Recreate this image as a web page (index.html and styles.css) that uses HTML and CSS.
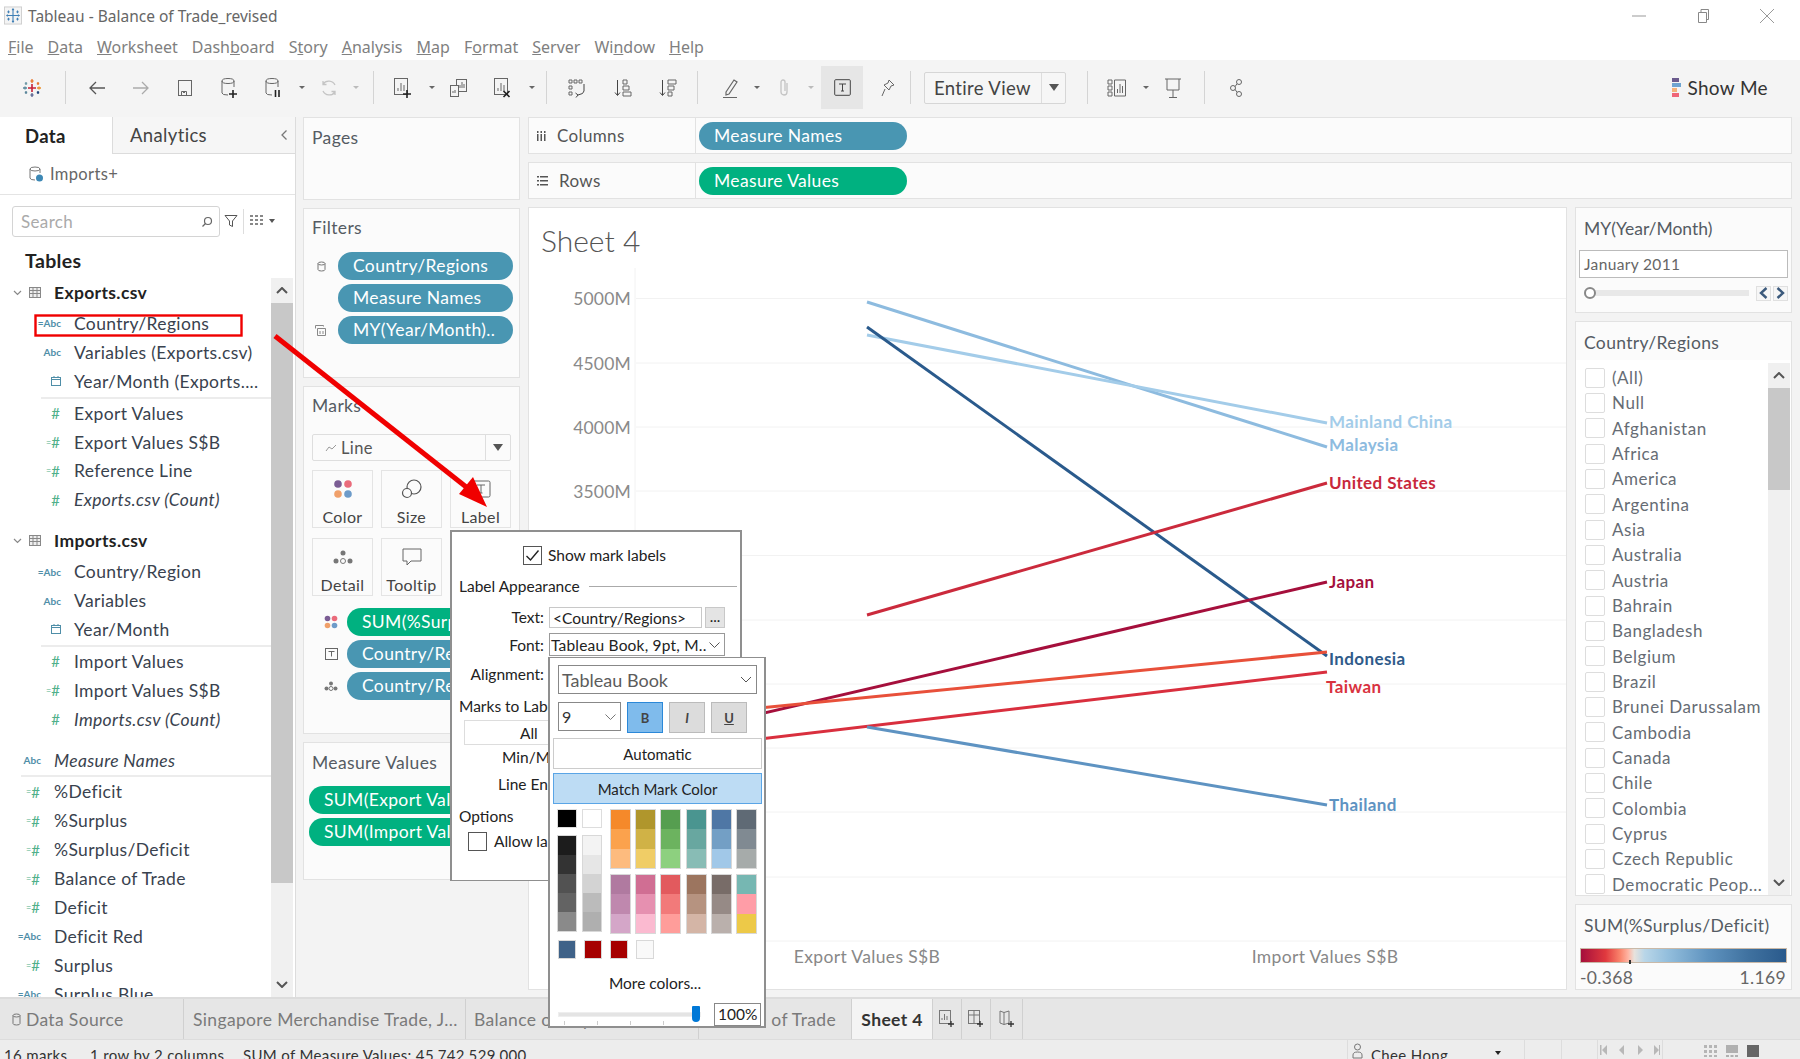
FILE: index.html
```html
<!DOCTYPE html>
<html lang="en">
<head>
<meta charset="utf-8">
<title>Tableau - Balance of Trade_revised</title>
<link rel="stylesheet" href="styles.css">
</head>
<body>
<div class="app">

  <header class="titlebar">
    <svg class="applogo" viewBox="0 0 20 20"><rect x=".5" y=".5" width="19" height="19" fill="#f4f4f4" stroke="#ccc"/><g stroke="#3f7fb5" stroke-width="1.2"><path d="M10 5v10M5 10h10M10 2v3M8.8 3.500h2.400M10 15v3M8.800 16.500h2.400M2.500 10h3M3.800 8.800v2.400M14.500 10h3M16 8.800v2.400M5 4.500v3M3.800 6h2.400M15 4.500v3M13.800 6h2.400M5 12.500v3M3.800 14h2.400M15 12.500v3M13.800 14h2.400"/></g></svg>
    <span class="apptitle">Tableau - Balance of Trade_revised</span>
    <div class="winbtns">
      <svg class="winbtn" viewBox="0 0 16 16"><path d="M1 8h14" stroke="#999" fill="none"/></svg>
      <svg class="winbtn" viewBox="0 0 16 16"><path d="M3.500 4.500h8v10h-8zM6 4.500V1.500h7.500v10H11.500" stroke="#888" fill="none"/></svg>
      <svg class="winbtn" viewBox="0 0 16 16"><path d="M1 1l14 14M15 1L1 15" stroke="#999" fill="none"/></svg>
    </div>
  </header>

  <nav class="menubar">
    <span><u>F</u>ile</span><span><u>D</u>ata</span><span><u>W</u>orksheet</span><span>Dash<u>b</u>oard</span><span>S<u>t</u>ory</span><span><u>A</u>nalysis</span><span><u>M</u>ap</span><span>F<u>o</u>rmat</span><span><u>S</u>erver</span><span>Wi<u>n</u>dow</span><span><u>H</u>elp</span>
  </nav>

  <div class="toolbar">
    <span class="ic logo"><svg width="20" height="20" viewBox="0 0 20 20" fill="none" stroke-width="1.300"><path d="M10 6v8M6 10h8" stroke="#c72035" stroke-width="1.600"/><path d="M10 1v4M8.500 3h3" stroke="#e8762c"/><path d="M10 15v4M8.500 17h3" stroke="#5c6692"/><path d="M1 10h4M3 8.500v3" stroke="#59879b"/><path d="M15 10h4M17 8.500v3" stroke="#eb912b"/><path d="M4 4v3M2.800 5.500h2.400" stroke="#7099a6"/><path d="M16 4v3M14.800 5.500h2.400" stroke="#e8762c"/><path d="M4 13v3M2.800 14.500h2.400" stroke="#5b879b"/><path d="M16 13v3M14.800 14.500h2.400" stroke="#1f447a"/></svg></span>
    <i class="sep m13"></i>
    <span class="ic ml9"><svg width="18" height="16" viewBox="0 0 18 16" fill="none" stroke="#555" stroke-width="1.300"><path d="M17 8H2M8 2L2 8l6 6"/></svg></span>
    <span class="ic"><svg width="18" height="16" viewBox="0 0 18 16" fill="none" stroke="#aaa" stroke-width="1.300"><path d="M1 8h15M10 2l6 6-6 6"/></svg></span>
    <span class="ic"><svg width="16" height="18" viewBox="0 0 16 18" fill="none" stroke="#666"><rect x="1.500" y="1.500" width="13" height="15"/><path d="M4.500 16.500v-4h5v4M6 13.500h2"/></svg></span>
    <span class="ic"><svg width="18" height="22" viewBox="0 0 18 22" fill="none" stroke="#666"><path d="M2 4v12q0 2 6 2M14 4v6M2 4q0-2.500 6-2.500T14 4q0 2.500-6 2.500T2 4z"/><path d="M13 13v8M9 17h8" stroke="#222" stroke-width="1.600"/></svg></span>
    <span class="ic"><svg width="18" height="22" viewBox="0 0 18 22" fill="none" stroke="#666"><path d="M2 4v12q0 2 6 2M14 4v6M2 4q0-2.500 6-2.500T14 4q0 2.500-6 2.500T2 4z"/><path d="M11.500 13v7M15 13v7" stroke="#222" stroke-width="1.600"/></svg></span>
    <span class="dd"></span>
    <span class="ic narrow"><svg width="18" height="18" viewBox="0 0 18 18" fill="none" stroke="#c4c4c4" stroke-width="1.300"><path d="M15 6a7 7 0 0 0-12-1M3 12a7 7 0 0 0 12 1M3 2v3.500h3.500M15 16v-3.500h-3.500"/></svg></span>
    <span class="dd light"></span>
    <i class="sep m10"></i>
    <span class="ic ml7"><svg width="20" height="22" viewBox="0 0 20 22" fill="none" stroke="#666"><rect x="1.500" y="1.500" width="13" height="16"/><path d="M5 14v-3M8 14V6M11 14V8"/><path d="M14 13v8M10 17h8" stroke="#222" stroke-width="1.600"/></svg></span>
    <span class="dd"></span>
    <span class="ic narrow"><svg width="20" height="20" viewBox="0 0 20 20" fill="none" stroke="#666"><rect x="7.500" y="1.500" width="10" height="12"/><rect x="1.500" y="7.500" width="8" height="11" fill="#f4f4f4"/><path d="M11 10V7M13 10V4M15 10V6M4 15v-2M6 15v-3"/></svg></span>
    <span class="ic ml2"><svg width="20" height="22" viewBox="0 0 20 22" fill="none" stroke="#666"><rect x="1.500" y="1.500" width="13" height="16"/><path d="M5 14v-3M8 14V6M11 14V8"/><path d="M10.500 14l6 6M16.500 14l-6 6" stroke="#222" stroke-width="1.600"/></svg></span>
    <span class="dd"></span>
    <i class="sep m7"></i>
    <span class="ic ml8"><svg width="20" height="20" viewBox="0 0 20 20" fill="none" stroke="#666"><path d="M2 2h3v3H2zM7 2h3v3H7zM12 2h3v3h-3zM2 8h3v3H2zM2 14h3v3H2z"/><path d="M17 6v7q0 3-6 4M8.500 15l2.500 2-2 2.500" stroke="#444"/></svg></span>
    <span class="ic ml2"><svg width="20" height="20" viewBox="0 0 20 20" fill="none" stroke="#666"><path d="M4.500 2v15M2 14.500l2.500 3 2.500-3" stroke="#444"/><path d="M10 2h4v4h-4zM10 8h6v4h-6zM10 14h8v4h-8z"/></svg></span>
    <span class="ic ml1"><svg width="20" height="20" viewBox="0 0 20 20" fill="none" stroke="#666"><path d="M4.500 2v15M2 14.500l2.500 3 2.500-3" stroke="#444"/><path d="M10 2h8v4h-8zM10 8h6v4h-6zM10 14h4v4h-4z"/></svg></span>
    <i class="sep m7"></i>
    <span class="ic narrow ml12"><svg width="18" height="22" viewBox="0 0 18 22" fill="none" stroke="#666"><path d="M5 15L13 3l3 2-8 12-3 1zM2 20.500h14" stroke-width="1.200"/></svg></span>
    <span class="dd"></span>
    <span class="ic narrow"><svg width="14" height="20" viewBox="0 0 14 20" fill="none" stroke="#c4c4c4" stroke-width="1.300"><path d="M10 5v9a3 3 0 0 1-6 0V4a2 2 0 0 1 4 0v9"/></svg></span>
    <span class="dd light"></span>
    <span class="ic active ml3"><svg width="17" height="17" viewBox="0 0 17 17" fill="none" stroke="#444"><rect x=".7" y=".7" width="15.600" height="15.600" rx="1"/><path d="M5 5h7M8.500 5v7M7 12h3"/></svg></span>
    <span class="ic ml3"><svg width="16" height="20" viewBox="0 0 16 20" fill="none" stroke="#666"><path d="M9 2l5 5-3 1-2 4-5-5 4-2zM5 11l-3 7"/></svg></span>
    <i class="sep nomargin"></i>
    <div class="viewsel"><span class="viewtxt">Entire View</span><span class="viewarrow"><b class="tri"></b></span></div>
    <i class="sep m21"></i>
    <span class="ic ml7"><svg width="20" height="22" viewBox="0 0 20 22" fill="none" stroke="#666"><path d="M1 3h4v4H1zM1 9h4v4H1zM1 15h4v4H1zM7.500 3h11v16h-11z"/><path d="M10.500 16v-4M13 16V7M15.500 16V9"/></svg></span>
    <span class="dd"></span>
    <span class="ic narrow"><svg width="18" height="22" viewBox="0 0 18 22" fill="none" stroke="#666"><path d="M1 2h16M3 2v11h12V2M9 13v7M5 20.500h8"/></svg></span>
    <i class="sep m11"></i>
    <span class="ic ml9"><svg width="14" height="20" viewBox="0 0 14 20" fill="none" stroke="#666"><circle cx="10" cy="4" r="2.500"/><circle cx="4" cy="10" r="2.500"/><circle cx="10" cy="16" r="2.500"/><path d="M6 8.700l2-3M6 11.300l2 3"/></svg></span>
    <div class="showme"><span class="showicon"><b class="si1"></b><b class="si2"></b><b class="si3"></b><b class="si4"></b></span>Show Me</div>
  </div>

  <main class="main">
    <aside class="datapane">
      <div class="tabs"><div class="tab on">Data</div><div class="tab off">Analytics<svg class="collapse" width="8" height="12" viewBox="0 0 8 12" fill="none" stroke="#777" stroke-width="1.300"><path d="M6.500 1.500L2 6l4.500 4.500"/></svg></div></div>
      <div class="dsrow"><svg width="14" height="16" viewBox="0 0 14 16" fill="none" stroke="#777"><path d="M1 3v9q0 2 5 2M11 3v4M1 3q0-2 5-2t5 2q0 2-5 2-5 0-5-2z"/><circle cx="10.500" cy="12" r="3.500" fill="#3d88b5" stroke="none"/></svg><span>Imports+</span></div>
      <div class="searchrow">
        <div class="search"><span>Search</span><svg width="12" height="12" viewBox="0 0 12 12" fill="none" stroke="#666" stroke-width="1.200"><circle cx="7" cy="5" r="3.500"/><path d="M4.500 7.500L1.500 10.500"/></svg></div>
        <svg class="filt" width="14" height="14" viewBox="0 0 14 14" fill="none" stroke="#555"><path d="M1 1.500h12L8.500 7v5.500l-3-1.500V7z"/></svg>
        <i class="vsep"></i>
        <svg class="grid" width="13" height="11" viewBox="0 0 13 11" fill="#888"><path d="M0 0h3v2H0zM5 0h3v2H5zM10 0h3v2h-3zM0 4h3v2H0zM5 4h3v2H5zM10 4h3v2h-3zM0 8h3v2H0zM5 8h3v2H5zM10 8h3v2h-3z"/></svg>
        <b class="tri small"></b>
      </div>
      <div class="tablesh">Tables</div>
      <div class="fieldwrap">
        <div class="fields">
          <div class="tbl"><svg class="chev" width="9" height="6" viewBox="0 0 9 6" fill="none" stroke="#888" stroke-width="1.200"><path d="M1 1l3.500 3.500L8 1"/></svg><svg class="tblic" width="12" height="11" viewBox="0 0 12 11" fill="#eee" stroke="#888"><rect x=".5" y=".5" width="11" height="10"/><path d="M.5 3.500h11M.5 6.500h11M4 .5v10M8 .5v10" fill="none"/></svg><span>Exports.csv</span></div>
          <div class="f"><span class="t a">=Abc</span><span>Country/Regions</span></div>
          <div class="f"><span class="t a">Abc</span><span>Variables (Exports.csv)</span></div>
          <div class="f"><span class="t"><svg width="10" height="10" viewBox="0 0 10 10" fill="none" stroke="#4f8ea8"><rect x=".5" y="1.500" width="9" height="8"/><path d="M.5 3.500h9M3 0v2M7 0v2"/></svg></span><span>Year/Month (Exports....</span></div>
          <div class="fsep in"></div>
          <div class="f"><span class="t n">#</span><span>Export Values</span></div>
          <div class="f"><span class="t n"><small>=</small>#</span><span>Export Values S$B</span></div>
          <div class="f"><span class="t n"><small>=</small>#</span><span>Reference Line</span></div>
          <div class="f"><span class="t n">#</span><em>Exports.csv (Count)</em></div>
          <div class="tbl gapt"><svg class="chev" width="9" height="6" viewBox="0 0 9 6" fill="none" stroke="#888" stroke-width="1.200"><path d="M1 1l3.500 3.500L8 1"/></svg><svg class="tblic" width="12" height="11" viewBox="0 0 12 11" fill="#eee" stroke="#888"><rect x=".5" y=".5" width="11" height="10"/><path d="M.5 3.500h11M.5 6.500h11M4 .5v10M8 .5v10" fill="none"/></svg><span>Imports.csv</span></div>
          <div class="f"><span class="t a">=Abc</span><span>Country/Region</span></div>
          <div class="f"><span class="t a">Abc</span><span>Variables</span></div>
          <div class="f"><span class="t"><svg width="10" height="10" viewBox="0 0 10 10" fill="none" stroke="#4f8ea8"><rect x=".5" y="1.500" width="9" height="8"/><path d="M.5 3.500h9M3 0v2M7 0v2"/></svg></span><span>Year/Month</span></div>
          <div class="fsep in"></div>
          <div class="f"><span class="t n">#</span><span>Import Values</span></div>
          <div class="f"><span class="t n"><small>=</small>#</span><span>Import Values S$B</span></div>
          <div class="f"><span class="t n">#</span><em>Imports.csv (Count)</em></div>
          <div class="f top gapt"><span class="t a">Abc</span><em>Measure Names</em></div>
          <div class="fsep out"></div>
          <div class="f top"><span class="t n"><small>=</small>#</span><span>%Deficit</span></div>
          <div class="f top"><span class="t n"><small>=</small>#</span><span>%Surplus</span></div>
          <div class="f top"><span class="t n"><small>=</small>#</span><span>%Surplus/Deficit</span></div>
          <div class="f top"><span class="t n"><small>=</small>#</span><span>Balance of Trade</span></div>
          <div class="f top"><span class="t n"><small>=</small>#</span><span>Deficit</span></div>
          <div class="f top"><span class="t a">=Abc</span><span>Deficit Red</span></div>
          <div class="f top"><span class="t n"><small>=</small>#</span><span>Surplus</span></div>
          <div class="f top"><span class="t a">=Abc</span><span>Surplus Blue</span></div>
        </div>
        <div class="vscroll big">
          <div class="sbtn"><svg width="12" height="7" viewBox="0 0 12 7" fill="none" stroke="#555" stroke-width="2"><path d="M1 6l5-5 5 5"/></svg></div>
          <div class="thumb"></div>
          <div class="track"></div>
          <div class="sbtn"><svg width="12" height="7" viewBox="0 0 12 7" fill="none" stroke="#555" stroke-width="2"><path d="M1 1l5 5 5-5"/></svg></div>
        </div>
      </div>
    </aside>

    <section class="cards">
      <div class="card pages"><h3>Pages</h3></div>
      <div class="card filters">
        <h3>Filters</h3>
        <div class="pillrow"><span class="pic"><svg width="9" height="11" viewBox="0 0 9 11" fill="none" stroke="#777"><path d="M1 2.500v6q0 1.500 3.500 1.500T8 8.500v-6M1 2.500Q1 1 4.500 1T8 2.500 4.500 4 1 2.500z"/></svg></span><span class="pill blue">Country/Regions</span></div>
        <div class="pillrow"><span class="pic"></span><span class="pill blue">Measure Names</span></div>
        <div class="pillrow"><span class="pic"><svg width="11" height="11" viewBox="0 0 11 11" fill="none" stroke="#888"><path d="M.5 3.500v-3h8v1M2.500 10.500v-7h8v7z"/><path d="M5 9V6M8 9V6"/></svg></span><span class="pill blue">MY(Year/Month)..</span></div>
      </div>
      <div class="card marks">
        <h3>Marks</h3>
        <div class="marksel"><svg width="12" height="8" viewBox="0 0 12 8" fill="none" stroke="#999"><path d="M1 7l3-4 3 2 4-4"/></svg><span>Line</span><span class="markarrow"><b class="tri"></b></span></div>
        <div class="markbtns">
          <div class="mb"><svg width="20" height="20" viewBox="0 0 20 20"><circle cx="5" cy="5" r="3.800" fill="#7b5d94"/><circle cx="15" cy="5" r="3.800" fill="#ea6b7b"/><circle cx="5" cy="15" r="3.800" fill="#f0a06a"/><circle cx="15" cy="15" r="3.800" fill="#6d9bc9"/></svg><span>Color</span></div>
          <div class="mb"><svg width="22" height="20" viewBox="0 0 22 20" fill="none" stroke="#555" stroke-width="1.200"><circle cx="13" cy="8" r="7"/><circle cx="6" cy="14" r="4.500" fill="#fbfbfb"/></svg><span>Size</span></div>
          <div class="mb"><svg width="20" height="20" viewBox="0 0 20 18" fill="none" stroke="#666"><rect x="1" y="1" width="18" height="16" rx="1.500"/><path d="M6 5h8M10 5v8M8.500 13h3"/></svg><span>Label</span></div>
          <div class="mb"><svg width="22" height="20" viewBox="0 0 22 16" fill="#777"><circle cx="11" cy="4" r="2.500"/><circle cx="4" cy="12" r="2.500"/><circle cx="11" cy="12" r="2.500" fill="none" stroke="#777"/><circle cx="18" cy="12" r="2.500"/></svg><span>Detail</span></div>
          <div class="mb"><svg width="20" height="20" viewBox="0 0 20 18" fill="none" stroke="#666"><path d="M1 1h18v12H9l-4 4v-4H1z"/></svg><span>Tooltip</span></div>
        </div>
        <div class="markpills">
          <div class="pillrow tight"><span class="pic"><svg width="14" height="14" viewBox="0 0 20 20"><circle cx="5" cy="5" r="4" fill="#7b5d94"/><circle cx="15" cy="5" r="4" fill="#ea6b7b"/><circle cx="5" cy="15" r="4" fill="#f0a06a"/><circle cx="15" cy="15" r="4" fill="#6d9bc9"/></svg></span><span class="pill green">SUM(%Surplus/Deficit)</span></div>
          <div class="pillrow tight"><span class="pic"><svg width="13" height="12" viewBox="0 0 13 12" fill="none" stroke="#666"><rect x=".5" y=".5" width="12" height="11"/><path d="M3.500 3.500h6M6.500 3.500v5"/></svg></span><span class="pill blue">Country/Regions</span></div>
          <div class="pillrow tight"><span class="pic"><svg width="14" height="10" viewBox="0 0 14 10" fill="#777"><circle cx="7" cy="2.500" r="2"/><circle cx="2.500" cy="7.500" r="2"/><circle cx="7" cy="7.500" r="2" fill="none" stroke="#777"/><circle cx="11.500" cy="7.500" r="2"/></svg></span><span class="pill blue">Country/Regions</span></div>
        </div>
      </div>
      <div class="card measures">
        <h3>Measure Values</h3>
        <span class="pill green wide">SUM(Export Values S$B)</span>
        <span class="pill green wide">SUM(Import Values S$B)</span>
      </div>
    </section>

    <section class="work">
      <div class="shelf"><span class="shelfhead"><svg width="9" height="10" viewBox="0 0 9 10" fill="#555"><path d="M0 0h1.500v2H0zM0 3h1.500v7H0zM3.500 0H5v2H3.500zM3.500 3H5v7H3.500zM7 0h1.500v2H7zM7 3h1.500v7H7z"/></svg>Columns</span><span class="pill blue shelfpill">Measure Names</span></div>
      <div class="shelf"><span class="shelfhead"><svg width="11" height="10" viewBox="0 0 11 10" fill="#555"><path d="M0 0h2v1.500H0zM3 0h8v1.500H3zM0 4h2v1.500H0zM3 4h8v1.500H3zM0 8h2v1.500H0zM3 8h8v1.500H3z"/></svg>Rows</span><span class="pill green shelfpill">Measure Values</span></div>
      <div class="workrow">
        <div class="viewport">
          <svg class="chart" viewBox="529 208 1037 781">
            <text class="sheettitle" x="541" y="252">Sheet 4</text>
            <path class="grid-l" d="M635 268V990M636 298.500H1566M636 363H1566M636 427H1566M636 491H1566M636 555.500H1566M636 620H1566M636 684H1566M636 748H1566M636 812H1566M636 877H1566M636 941H1566"/>
            <text class="axis" x="631" y="305">5000M</text>
            <text class="axis" x="631" y="370">4500M</text>
            <text class="axis" x="631" y="434">4000M</text>
            <text class="axis" x="631" y="498">3500M</text>
            <g class="lines">
              <path stroke="#8dbbdf" d="M867 302L1327 447"/>
              <path stroke="#a3cce9" d="M867 335L1327 423"/>
              <path stroke="#2a5a8c" d="M867 327L1327 656"/>
              <path stroke="#cb2a3c" d="M867 615L1327 483"/>
              <path stroke="#a50f3c" d="M760 714L1327 582"/>
              <path stroke="#e8503a" d="M760 708L1327 652"/>
              <path stroke="#d92f3e" d="M760 739L1327 672"/>
              <path stroke="#5e93c2" d="M867 727L1327 805"/>
            </g>
            <text class="ml" x="1329" y="428" fill="#a3cce9">Mainland China</text>
            <text class="ml" x="1329" y="451" fill="#8dbbdf">Malaysia</text>
            <text class="ml" x="1329" y="489" fill="#c8283c">United States</text>
            <text class="ml" x="1329" y="588" fill="#a50f3c">Japan</text>
            <text class="ml" x="1329" y="665" fill="#2f5b8a">Indonesia</text>
            <text class="ml" x="1326" y="693" fill="#d9333f">Taiwan</text>
            <text class="ml" x="1329" y="811" fill="#5e93c2">Thailand</text>
            <text class="colh" x="867" y="963">Export Values S$B</text>
            <text class="colh" x="1325" y="963">Import Values S$B</text>
          </svg>
        </div>
        <div class="side">
          <div class="card mypanel">
            <h3>MY(Year/Month)</h3>
            <div class="myinput">January 2011</div>
            <div class="slider"><i class="knob"></i><span class="sltrack"></span><span class="sb"><svg width="9" height="12" viewBox="0 0 9 12" fill="none" stroke="#3c5a7c" stroke-width="2.400"><path d="M7.500 1L2 6l5.500 5"/></svg></span><span class="sb"><svg width="9" height="12" viewBox="0 0 9 12" fill="none" stroke="#3c5a7c" stroke-width="2.400"><path d="M1.500 1L7 6l-5.500 5"/></svg></span></div>
          </div>
          <div class="card cpanel">
            <h3>Country/Regions</h3>
            <div class="clist">
              <ul class="citems">
                <li><i></i>(All)</li><li><i></i>Null</li><li><i></i>Afghanistan</li><li><i></i>Africa</li><li><i></i>America</li><li><i></i>Argentina</li><li><i></i>Asia</li><li><i></i>Australia</li><li><i></i>Austria</li><li><i></i>Bahrain</li><li><i></i>Bangladesh</li><li><i></i>Belgium</li><li><i></i>Brazil</li><li><i></i>Brunei Darussalam</li><li><i></i>Cambodia</li><li><i></i>Canada</li><li><i></i>Chile</li><li><i></i>Colombia</li><li><i></i>Cyprus</li><li><i></i>Czech Republic</li><li><i></i>Democratic Peop...</li>
              </ul>
              <div class="vscroll small">
                <div class="sbtn"><svg width="12" height="7" viewBox="0 0 12 7" fill="none" stroke="#555" stroke-width="2"><path d="M1 6l5-5 5 5"/></svg></div>
                <div class="thumb"></div>
                <div class="track"></div>
                <div class="sbtn"><svg width="12" height="7" viewBox="0 0 12 7" fill="none" stroke="#555" stroke-width="2"><path d="M1 1l5 5 5-5"/></svg></div>
              </div>
            </div>
          </div>
          <div class="card legend">
            <h3>SUM(%Surplus/Deficit)</h3>
            <div class="gradbar"><i class="tick"></i></div>
            <div class="gradlbl"><span>-0.368</span><span>1.169</span></div>
          </div>
        </div>
      </div>
    </section>
  </main>

  <div class="tabbar">
    <div class="stab ds"><svg width="9" height="13" viewBox="0 0 9 13" fill="none" stroke="#777"><path d="M1 2.500v8q0 1.500 3.500 1.500T8 10.500v-8M1 2.500Q1 1 4.500 1T8 2.500 4.500 4 1 2.500z"/></svg>Data Source</div>
    <div class="stab sing">Singapore Merchandise Trade, J...</div>
    <div class="stab bop">Balance of Payments</div>
    <div class="stab bot">Balance of Trade</div>
    <div class="stab cur">Sheet 4</div>
    <div class="stab mini"><svg width="16" height="18" viewBox="0 0 16 18" fill="none" stroke="#777"><rect x=".5" y=".5" width="11" height="13"/><path d="M3 10V8M5.500 10V4M8 10V6"/><path d="M12 11v6M9 14h6" stroke="#333" stroke-width="1.300"/></svg></div>
    <div class="stab mini"><svg width="16" height="18" viewBox="0 0 16 18" fill="none" stroke="#777"><rect x=".5" y=".5" width="11" height="13"/><path d="M.5 5h11M6 .5v13"/><path d="M12 11v6M9 14h6" stroke="#333" stroke-width="1.300"/></svg></div>
    <div class="stab mini last"><svg width="16" height="18" viewBox="0 0 16 18" fill="none" stroke="#777"><path d="M1 1l4 1.500 5-1.500v12l-5 1.500L1 13zM5 2.500v12"/><path d="M12 11v6M9 14h6" stroke="#333" stroke-width="1.300"/></svg></div>
  </div>

  <footer class="status">
    <span class="st1">16 marks</span><span class="st2">1 row by 2 columns</span><span class="st3">SUM of Measure Values: 45,742,529,000</span>
    <div class="stuser"><svg width="11" height="16" viewBox="0 0 11 16" fill="none" stroke="#777"><circle cx="5.500" cy="4" r="3"/><path d="M1 15v-3q0-3 4.500-3t4.500 3v3z"/></svg><span>Chee Hong</span><b class="tri small dark"></b></div>
    <div class="stcell c1"></div><div class="stcell c2"></div>
    <div class="stcell pager"><svg width="60" height="10" viewBox="0 0 60 10" fill="#b8b8b8"><path d="M0 0h1.500v10H0zM2 5l5-5v10zM19 5l5-5v10zM38 0l5 5-5 5zM54 0l5 5-5 5zM59 0h1v10h-1z"/></svg></div>
    <div class="stcell views"><svg width="14" height="12" viewBox="0 0 14 12" fill="#b5b5b5"><path d="M0 0h3v3H0zM5 0h3v3H5zM10 0h3v3h-3zM0 5h3v3H0zM5 5h3v3H5zM10 5h3v3h-3zM0 10h3v2H0zM5 10h3v2H5zM10 10h3v2h-3z"/></svg><svg width="14" height="12" viewBox="0 0 14 12" fill="#b0b0b0"><path d="M1 0h12v8H1zM1 10h3v2H1zM5.500 10h3v2h-3zM10 10h3v2h-3z"/></svg><svg width="14" height="12" viewBox="0 0 14 12" fill="#666"><path d="M1 0h12v12H1z"/></svg></div>
  </footer>

  <svg class="annot" viewBox="0 0 1800 1059">
    <rect x="35.500" y="315.500" width="206" height="20" fill="none" stroke="#f00000" stroke-width="2.400"/>
    <path d="M275 336L470 490" stroke="#f00000" stroke-width="5" fill="none"/>
    <path d="M487 507L459 494 473 477z" fill="#f00000"/>
  </svg>

  <div class="labelpop">
    <div class="lp-check"><span class="chk"><svg width="15" height="13" viewBox="0 0 15 13" fill="none" stroke="#222" stroke-width="1.400"><path d="M1.500 7l4 4 8-9.500"/></svg></span>Show mark labels</div>
    <div class="lp-head"><span>Label Appearance</span><i></i></div>
    <div class="lp-row r-text"><label>Text:</label><span class="lp-input">&lt;Country/Regions&gt;</span><span class="lp-dots">...</span></div>
    <div class="lp-row r-font"><label>Font:</label><span class="lp-select">Tableau Book, 9pt, M..<svg width="11" height="6" viewBox="0 0 11 6" fill="none" stroke="#555"><path d="M.5.500l5 5 5-5"/></svg></span></div>
    <div class="lp-row r-align"><label>Alignment:</label></div>
    <div class="lp-sub">Marks to Label</div>
    <div class="lp-all">All</div>
    <div class="lp-ind i1">Min/Max</div>
    <div class="lp-ind i2">Line Ends</div>
    <div class="lp-sub opt">Options</div>
    <div class="lp-allow"><span class="chk empty"></span>Allow labels</div>
  </div>

  <div class="fontpop">
    <div class="fp-select">Tableau Book<svg width="12" height="7" viewBox="0 0 12 7" fill="none" stroke="#555"><path d="M1 1l5 5 5-5"/></svg></div>
    <div class="fp-row">
      <div class="fp-size">9<svg width="11" height="6" viewBox="0 0 11 6" fill="none" stroke="#777"><path d="M.5.500l5 5 5-5"/></svg></div>
      <div class="fp-b on">B</div><div class="fp-b it">I</div><div class="fp-b un">U</div>
    </div>
    <div class="fp-btn auto">Automatic</div>
    <div class="fp-btn match">Match Mark Color</div>
    <div class="palette">
      <div class="pal-g">
        <div class="sw-top"><i class="c-000"></i><i class="c-fff"></i></div>
        <div class="sw-col"><div class="stack s5"><i class="g1"></i><i class="g2"></i><i class="g3"></i><i class="g4"></i><i class="g5"></i></div><div class="stack s5"><i class="w1"></i><i class="w2"></i><i class="w3"></i><i class="w4"></i><i class="w5"></i></div></div>
      </div>
      <div class="pal-c">
        <div class="stack"><i class="a1"></i><i class="a2"></i><i class="a3"></i></div>
        <div class="stack"><i class="b1"></i><i class="b2"></i><i class="b3"></i></div>
        <div class="stack"><i class="d1"></i><i class="d2"></i><i class="d3"></i></div>
        <div class="stack"><i class="e1"></i><i class="e2"></i><i class="e3"></i></div>
        <div class="stack"><i class="h1"></i><i class="h2"></i><i class="h3"></i></div>
        <div class="stack"><i class="j1"></i><i class="j2"></i><i class="j3"></i></div>
        <div class="stack"><i class="k1"></i><i class="k2"></i><i class="k3"></i></div>
        <div class="stack"><i class="l1"></i><i class="l2"></i><i class="l3"></i></div>
        <div class="stack"><i class="m1"></i><i class="m2"></i><i class="m3"></i></div>
        <div class="stack"><i class="o1"></i><i class="o2"></i><i class="o3"></i></div>
        <div class="stack"><i class="p1"></i><i class="p2"></i><i class="p3"></i></div>
        <div class="stack"><i class="q1"></i><i class="q2"></i><i class="q3"></i></div>
      </div>
    </div>
    <div class="recent"><i class="r1"></i><i class="r2"></i><i class="r2"></i><i class="r3"></i></div>
    <div class="more">More colors...</div>
    <div class="opacity">
      <div class="opslider"><span class="optrack"></span><span class="opthumb"></span><span class="opticks"><i></i><i></i><i></i><i></i></span></div>
      <div class="oppct">100%</div>
    </div>
  </div>

</div>
</body>
</html>
```

FILE: styles.css
```css
* { box-sizing: border-box; }
html, body { margin: 0; padding: 0; }
body { width: 1800px; height: 1059px; overflow: hidden; background: #f3f3f3; font-family: "Lato", "Liberation Sans", sans-serif; color: #333e48; letter-spacing: .35px; }
.app { position: relative; width: 1800px; height: 1059px; display: flex; flex-direction: column; overflow: hidden; }

/* title + menu */
.titlebar { height: 30px; background: #fff; display: flex; align-items: center; padding: 1px 0 0 4px; font-family: "Noto Sans", sans-serif; letter-spacing: 0; }
.applogo { width: 18px; height: 19px; }
.apptitle { margin-left: 6px; font-size: 15.500px; color: #666; }
.winbtns { margin-left: auto; display: flex; align-items: center; padding-right: 25px; }
.winbtn { width: 16px; height: 16px; margin-left: 48px; }
.menubar { height: 30px; background: #fff; display: flex; align-items: center; gap: 14px; padding: 4px 0 0 8px; font-family: "Noto Sans", sans-serif; font-size: 16px; color: #808080; letter-spacing: 0; }

/* toolbar */
.toolbar { height: 57px; background: #f4f4f4; display: flex; align-items: center; padding: 0 32px 2px 12px; }
.ic { width: 44px; height: 43px; display: flex; align-items: center; justify-content: center; flex: none; }
.ic.logo { width: 40px; }
.ic.narrow { width: 40px; }
.ic.active { width: 42px; background: #e6e6e6; }
.dd { width: 14px; height: 43px; display: flex; align-items: center; justify-content: center; flex: none; }
.dd::after { content: ""; border: 3px solid transparent; border-top: 3.500px solid #666; border-bottom: 0; }
.dd.light::after { border-top-color: #bbb; }
.sep { width: 1px; height: 33px; background: #d4d4d4; flex: none; }
.sep.m13 { margin-left: 13px; }
.sep.m11 { margin-left: 11px; }
.sep.m10 { margin-left: 10px; }
.sep.m7 { margin-left: 7px; }
.sep.m21 { margin-left: 21px; }
.ml1 { margin-left: 1px; } .ml2 { margin-left: 2px; } .ml3 { margin-left: 3px; } .ml7 { margin-left: 7px; } .ml8 { margin-left: 8px; } .ml9 { margin-left: 9px; } .ml12 { margin-left: 12px; }
.viewsel { margin-left: 13px; width: 142px; height: 32px; display: flex; align-items: center; border: 1px solid #d6d6d6; border-radius: 2px; background: #f6f6f6; flex: none; font-size: 18.500px; color: #444; }
.viewtxt { flex: 1; padding-left: 9px; white-space: nowrap; }
.viewarrow { width: 24px; height: 100%; border-left: 1px solid #ddd; display: flex; align-items: center; justify-content: center; }
.tri { display: inline-block; border: 5px solid transparent; border-top: 7px solid #555; border-bottom: 0; }
.tri.small { border-width: 3.500px; border-top-width: 4px; border-bottom-width: 0; }
.tri.dark { border-top-color: #222; }
.showme { margin-left: auto; display: flex; align-items: center; font-size: 19px; color: #333; gap: 6px; }
.showicon { width: 9px; display: flex; flex-direction: column; gap: 1px; }
.showicon b { display: block; height: 4px; }
.si1 { background: #6b5b8d; width: 7px; } .si2 { background: #6ea4d0; } .si3 { background: #f3b27a; width: 5px; } .si4 { background: #ef6678; width: 7px; }

/* main layout */
.main { height: 880px; display: flex; align-items: stretch; background: #f3f3f3; }
.datapane { width: 296px; flex: none; background: #fff; border-right: 1px solid #dcdcdc; display: flex; flex-direction: column; }
.tabs { height: 37px; display: flex; flex: none; font-size: 18.500px; }
.tab { display: flex; align-items: center; }
.tab.on { width: 112px; padding-left: 25px; font-weight: 700; color: #222; }
.tab.off { flex: 1; padding-left: 17px; background: #f6f6f6; border-left: 1px solid #dcdcdc; border-bottom: 1px solid #dcdcdc; color: #444; position: relative; }
.collapse { margin-left: auto; margin-right: 7px; }
.dsrow { height: 41px; flex: none; display: flex; align-items: center; gap: 7px; padding-left: 29px; border-bottom: 1px solid #e4e4e4; font-size: 16.500px; color: #666; }
.searchrow { height: 47px; flex: none; display: flex; align-items: flex-start; padding: 11px 0 0 12px; }
.search { width: 208px; height: 31px; border: 1px solid #d4d4d4; border-radius: 3px; display: flex; align-items: center; justify-content: space-between; padding: 0 6px 0 8px; font-size: 17px; color: #aaa; background: #fff; }
.filt { margin: 8px 0 0 4px; }
.vsep { width: 1px; height: 25px; background: #ddd; margin: 3px 0 0 5px; }
.grid { margin: 9px 0 0 6px; }
.searchrow .tri { margin: 13px 0 0 6px; }
.tablesh { height: 36px; flex: none; padding: 3px 0 0 25px; line-height: 31px; font-size: 19.500px; font-weight: 700; color: #222; }
.fieldwrap { flex: 1; min-height: 0; display: flex; overflow: hidden; height: 713px; padding-right: 2px; }
.fields { flex: 1; overflow: hidden; font-size: 17.500px; }
.tbl { height: 31px; display: flex; align-items: center; font-weight: 700; font-size: 17.500px; color: #222; padding-left: 13px; padding-bottom: 2px; }
.tbl.gapt { margin-top: 12px; }
.tblic { margin-left: 7px; margin-right: 13px; }
.f { height: 28.900px; display: flex; align-items: center; white-space: nowrap; color: #39424e; }
.f.gapt { margin-top: 12px; }
.t { width: 63px; padding-right: 2px; flex: none; text-align: right; margin-right: 11px; font-weight: 700; display: flex; justify-content: flex-end; align-items: center; letter-spacing: 0; }
.t.a { font-size: 10px; color: #4f8ea8; }
.t.n { font-size: 15px; color: #4fb08a; padding-right: 3px; font-weight: 400; }
.t small { font-size: 9px; }
.f.top .t { width: 43px; }
.f em { font-style: italic; }
.fsep { height: 3px; border-bottom: 2px solid #ececec; }
.fsep.in { margin-left: 41px; }
.fsep.out { margin-left: 21px; }
.vscroll { width: 22px; flex: none; display: flex; flex-direction: column; background: #f0f0f0; }
.sbtn { height: 25px; flex: none; display: flex; align-items: center; justify-content: center; }
.thumb { background: #c8c8c8; flex: none; }
.track { flex: 1; }
.vscroll.big .thumb { height: 580px; }
.vscroll.small .thumb { height: 102px; }

/* cards */
.cards { width: 217px; flex: none; margin-left: 7px; display: flex; flex-direction: column; gap: 8px; }
.card { background: #fbfbfb; border: 1px solid #e2e2e2; }
.card h3 { margin: 0; font-weight: 400; font-size: 17.500px; color: #555b63; padding-left: 8px; white-space: nowrap; }
.pages { height: 83px; padding-top: 8px; line-height: 24px; }
.filters { height: 170px; padding-top: 7px; }
.filters h3 { line-height: 24px; margin-bottom: 12px; }
.pillrow { display: flex; align-items: center; height: 28px; margin-bottom: 4px; }
.pic { width: 34px; flex: none; display: flex; justify-content: flex-end; padding-right: 12px; align-items: center; }
.pill { display: block; height: 28px; line-height: 27px; border-radius: 14px; color: #fff; font-size: 17.500px; padding-left: 15px; white-space: nowrap; overflow: hidden; }
.blue { background: #4996b2; }
.green { background: #00b180; }
.filters .pill { width: 175px; }
.marks { height: 348px; padding-top: 7px; }
.marks h3 { line-height: 24px; }
.marksel { margin: 16px 8px 0 8px; height: 27px; border: 1px solid #dedede; background: #fbfbfb; border-radius: 2px; display: flex; align-items: center; padding-left: 12px; gap: 4px; font-size: 16.500px; color: #555; }
.markarrow { margin-left: auto; width: 25px; height: 100%; border-left: 1px solid #dedede; display: flex; align-items: center; justify-content: center; }
.markbtns { margin: 9px 8px 0 8px; display: grid; grid-template-columns: repeat(3, 61px); grid-auto-rows: 58px; column-gap: 8px; row-gap: 10px; }
.mb { border: 1px solid #e4e4e4; display: flex; flex-direction: column; align-items: center; justify-content: flex-start; gap: 8px; padding-top: 8px; font-size: 16px; color: #444; }
.markpills { margin-top: 12px; }
.pillrow.tight { height: 28px; margin-bottom: 4px; }
.pillrow.tight .pic { width: 43px; padding-right: 9px; }
.pillrow.tight .pill { width: 160px; }
.measures { height: 138px; padding-top: 8px; }
.measures h3 { line-height: 24px; margin-bottom: 11px; }
.pill.wide { width: 200px; margin: 0 0 4px 5px; }

/* workspace */
.work { flex: 1; min-width: 0; margin: 0 8px; display: flex; flex-direction: column; gap: 8px; }
.shelf { height: 37px; flex: none; background: #fbfbfb; border: 1px solid #e2e2e2; display: flex; align-items: center; }
.shelfhead { width: 167px; height: 100%; border-right: 1px solid #e2e2e2; display: flex; align-items: center; gap: 11px; padding-left: 8px; font-size: 17px; color: #555; flex: none; }
.shelfpill { width: 208px; margin-left: 3px; }
.workrow { flex: 1; min-height: 0; display: flex; gap: 8px; padding-bottom: 7px; }
.viewport { flex: 1; background: #fff; border: 1px solid #e2e2e2; min-width: 0; }
.chart { display: block; width: 1037px; height: 781px; font-family: "Lato", "Liberation Sans", sans-serif; }
.sheettitle { font-size: 30px; font-weight: 300; fill: #555; letter-spacing: 0; }
.grid-l { stroke: #f2f2f2; stroke-width: 1; fill: none; }
.axis { font-size: 17.500px; fill: #8a8a8a; text-anchor: end; letter-spacing: .2px; }
.lines path { stroke-width: 3; fill: none; }
.ml { font-size: 17px; font-weight: 700; letter-spacing: .4px; }
.colh { font-size: 17.500px; fill: #888; text-anchor: middle; }
.side { width: 217px; flex: none; display: flex; flex-direction: column; gap: 8px; }
.mypanel { height: 107px; padding-top: 9px; }
.mypanel h3 { line-height: 24px; letter-spacing: 0; }
.myinput { margin: 9px 3px 0 3px; height: 28px; border: 1px solid #bbb; background: #fff; padding-left: 4px; line-height: 27px; font-size: 15.500px; color: #666; }
.slider { position: relative; height: 16px; margin: 7px 3px 0 8px; display: flex; align-items: center; }
.knob { position: absolute; left: 0; top: 2px; width: 12px; height: 12px; border-radius: 50%; border: 2px solid #888; background: #fff; }
.sltrack { flex: 1; height: 6px; background: #e8e8e8; margin-right: 5px; }
.sb { width: 15px; height: 15px; margin-left: 2px; border: 1px solid #e0e0e0; background: #f6f6f6; display: flex; align-items: center; justify-content: center; }
.cpanel { height: 575px; display: flex; flex-direction: column; }
.cpanel h3 { height: 38px; line-height: 41px; flex: none; }
.clist { flex: 1; min-height: 0; background: #fff; display: flex; overflow: hidden; padding-top: 3px; }
.citems { list-style: none; margin: 0; padding: 2px 0 0 9px; flex: 1; overflow: hidden; font-size: 17px; color: #666c74; letter-spacing: .55px; }
.citems li { height: 25.340px; display: flex; align-items: center; white-space: nowrap; }
.citems i { width: 20px; height: 20px; border: 1px solid #ddd; border-radius: 2px; margin-right: 7px; background: #fff; flex: none; }
.cpanel .vscroll { margin-right: 1px; }
.legend { flex: 1; height: 86px; }
.legend h3 { line-height: 24px; padding-top: 0; margin-top: 9px; }
.gradbar { position: relative; margin: 10px 4px 0 4px; height: 15px; border: 1px solid #c9b9a8; background: linear-gradient(to right, #a50f3c 0%, #e0393e 12%, #f9836b 19%, #ffb4a2 23%, #e8e2dc 26%, #b9d6e8 31%, #94bfdd 42%, #5f93bf 62%, #3f719f 82%, #2a5a8c 100%); }
.tick { position: absolute; left: 48px; bottom: -2px; width: 2px; height: 4px; background: #333; }
.gradlbl { display: flex; justify-content: space-between; padding: 3px 5px 0 4px; font-size: 17.500px; color: #666; line-height: 24px; }

/* bottom tabs */
.tabbar { height: 43px; flex: none; margin-top: 0; background: #e6e6e6; border-top: 2px solid #dcdcdc; border-bottom: 1px solid #dcdcdc; display: flex; font-size: 17.500px; color: #7a7a7a; }
.stab { display: flex; align-items: center; border-right: 1px solid #d0d0d0; white-space: nowrap; overflow: hidden; flex: none; }
.ds { width: 184px; padding-left: 12px; gap: 5px; }
.sing { width: 282px; padding-left: 9px; }
.bop { width: 233px; padding-left: 8px; }
.bot { width: 153px; justify-content: flex-end; padding-right: 15px; }
.cur { width: 81px; background: #f4f4f4; color: #333; font-weight: 700; justify-content: center; border-right: 1px solid #d0d0d0; }
.mini { width: 29px; justify-content: center; }
.mini.last { width: 32px; }

/* status */
.status { height: 19px; flex: none; background: #ededed; display: flex; font-size: 15px; color: #333; line-height: 31px; overflow: hidden; }
.st1 { margin-left: 4px; width: 86px; flex: none; }
.st2 { width: 153px; flex: none; }
.st3 { width: 1104px; flex: none; }
.status span { white-space: nowrap; }
.stuser { width: 177px; flex: none; border-left: 1px solid #ddd; display: flex; align-items: flex-start; padding: 3px 0 0 4px; gap: 8px; line-height: 25px; }
.stuser .tri { margin: 8px 0 0 auto; margin-right: 23px; }
.stcell { border-left: 1px solid #ddd; flex: none; display: flex; align-items: flex-start; padding-top: 5px; }
.c1 { width: 37px; } .c2 { width: 36px; }
.pager { width: 65px; justify-content: center; }
.views { flex: 1; gap: 7px; justify-content: center; }

/* annotation overlay */
.annot { position: absolute; left: 0; top: 0; width: 1800px; height: 1059px; pointer-events: none; }

/* label popup */
.labelpop { position: absolute; left: 450px; top: 530px; width: 292px; height: 351px; background: #fff; border: 2px solid #8f8f8f; border-bottom-width: 1px; font-size: 15.500px; color: #222; padding-top: 12px; letter-spacing: 0; }
.lp-check { height: 22px; display: flex; align-items: center; padding-left: 71px; gap: 6px; }
.chk { width: 19px; height: 19px; border: 1px solid #555; display: flex; align-items: center; justify-content: center; flex: none; }
.lp-head { height: 22px; margin-top: 9px; padding-left: 7px; display: flex; align-items: center; gap: 9px; white-space: nowrap; }
.lp-head i { width: 148px; height: 1px; background: #aaa; flex: none; }
.lp-row { display: flex; align-items: center; height: 22px; }
.lp-row label { width: 92px; text-align: right; margin-right: 5px; flex: none; }
.r-text { margin-top: 9px; }
.r-font { margin-top: 5px; height: 23px; }
.r-align { margin-top: 7px; }
.lp-input { width: 153px; height: 21px; border: 1px solid #c8c8c8; padding-left: 3px; line-height: 21px; overflow: hidden; white-space: nowrap; font-size: 15.500px; }
.lp-dots { width: 20px; height: 21px; margin-left: 3px; background: #e4e4e4; border: 1px solid #c8c8c8; text-align: center; line-height: 17px; font-size: 15px; }
.lp-select { width: 176px; height: 23px; border: 1px solid #999; padding-left: 1px; display: flex; align-items: center; justify-content: space-between; padding-right: 4px; white-space: nowrap; font-size: 15.500px; letter-spacing: .2px; }
.lp-sub { height: 22px; margin-top: 10px; padding-left: 7px; line-height: 22px; white-space: nowrap; }
.lp-all { height: 25px; margin: 3px 0 0 12px; width: 250px; border: 1px solid #ddd; padding-left: 55px; line-height: 24px; }
.lp-ind { height: 22px; line-height: 22px; white-space: nowrap; }
.i1 { margin-top: 1px; padding-left: 50px; }
.i2 { margin-top: 5px; padding-left: 46px; }
.lp-sub.opt { margin-top: 10px; }
.lp-allow { height: 22px; margin-top: 3px; padding-left: 16px; display: flex; align-items: center; gap: 7px; white-space: nowrap; }
.chk.empty { background: #fff; }

/* font popup */
.fontpop { position: absolute; left: 548px; top: 657px; width: 218px; height: 371px; background: #fff; border: 2px solid #8f8f8f; border-top-width: 1px; padding: 7px 3px 0 3px; color: #222; letter-spacing: 0; }
.fp-select { margin: 0 5px; width: 199px; height: 29px; border: 1px solid #888; display: flex; align-items: center; justify-content: space-between; padding: 0 4px 0 3px; font-size: 18px; color: #5c5c5c; }
.fp-row { margin: 8px 5px 0 5px; display: flex; gap: 6px; }
.fp-size { width: 63px; height: 29px; border: 1px solid #888; display: flex; align-items: center; justify-content: space-between; padding: 0 4px 0 3px; font-size: 16px; color: #333; }
.fp-b { width: 36px; height: 31px; background: #dcdcdc; border: 1px solid #bbb; display: flex; align-items: center; justify-content: center; font-size: 13px; color: #444; font-weight: 700; }
.fp-b.on { background: #7fbbec; border-color: #2b88d8; }
.fp-b.it { font-style: italic; }
.fp-b.un { text-decoration: underline; }
.fp-btn { width: 209px; height: 31px; display: flex; align-items: center; justify-content: center; font-size: 15px; color: #222; margin-top: 4px; }
.auto { margin-top: 5px; border: 1px solid #ccc; }
.match { background: #bddcf4; border: 1px solid #5aa5e6; }
.palette { display: flex; margin: 5px 0 0 4px; height: 125px; }
.pal-g { width: 49px; flex: none; display: flex; flex-direction: column; }
.sw-top { display: flex; gap: 5px; }
.sw-top i { width: 20px; height: 19px; border: 1px solid #ddd; }
.c-000 { background: #000; } .c-fff { background: #fff; }
.sw-col { display: flex; gap: 5px; margin-top: 7px; }
.stack { display: flex; flex-direction: column; border: 1px solid #d8d8d8; }
.stack.s5 { width: 20px; height: 97px; }
.stack i { display: block; flex: 1; }
.pal-c { margin-left: 4px; display: grid; grid-template-columns: repeat(6, 21px); column-gap: 4.200px; grid-template-rows: 60px 60px; row-gap: 5px; }
.g1 { background: #1c1c1c; } .g2 { background: #333; } .g3 { background: #525252; } .g4 { background: #636363; } .g5 { background: #8a8a8a; }
.w1 { background: #f3f3f3; } .w2 { background: #e6e6e6; } .w3 { background: #d3d3d3; } .w4 { background: #bbb; } .w5 { background: #afafaf; }
.a1 { background: #f5892a; } .a2 { background: #fba24d; } .a3 { background: #fdbb7e; }
.b1 { background: #b0962c; } .b2 { background: #d0b246; } .b3 { background: #f0cd66; }
.d1 { background: #569e50; } .d2 { background: #6cb35f; } .d3 { background: #8dd07f; }
.e1 { background: #4a9590; } .e2 { background: #68a7a0; } .e3 { background: #88bcb5; }
.h1 { background: #4f77a5; } .h2 { background: #739fc5; } .h3 { background: #a1c8e8; }
.j1 { background: #5f6a75; } .j2 { background: #808a92; } .j3 { background: #a6abaa; }
.k1 { background: #b07aa0; } .k2 { background: #bf88ae; } .k3 { background: #d4a6c8; }
.l1 { background: #d06e93; } .l2 { background: #e690b0; } .l3 { background: #fbbad0; }
.m1 { background: #e25a5e; } .m2 { background: #f27a7a; } .m3 { background: #ff9d9a; }
.o1 { background: #9c755f; } .o2 { background: #b69380; } .o3 { background: #d4b5a6; }
.p1 { background: #786c68; } .p2 { background: #968a86; } .p3 { background: #bab0ac; }
.q1 { background: #76b7b2; } .q2 { background: #ff9da7; } .q3 { background: #edc948; }
.recent { display: flex; gap: 8px; margin: 6px 0 0 5px; }
.recent i { width: 18px; height: 19px; border: 1px solid #d8d8d8; }
.r1 { background: #3f6288; } .r2 { background: #a60000; } .r3 { background: #f9f9f9; }
.more { margin-top: 13px; text-align: center; font-size: 15.500px; line-height: 22px; padding-right: 4px; }
.opacity { display: flex; align-items: flex-start; margin-top: 9px; padding-left: 5px; }
.opslider { position: relative; width: 145px; height: 22px; }
.optrack { position: absolute; left: 0; right: 0; top: 9px; height: 5px; background: #e4e4e4; border: 1px solid #eee; }
.opthumb { position: absolute; left: 134px; top: 3px; width: 8px; height: 16px; background: #0078d7; border-radius: 1px 1px 4px 4px; }
.opticks { position: absolute; left: 6px; top: 18px; display: flex; gap: 32px; }
.opticks i { width: 1px; height: 4px; background: #ccc; }
.oppct { margin-left: 13px; width: 47px; height: 23px; border: 1px solid #888; font-size: 15.500px; line-height: 21px; text-align: center; }
```
